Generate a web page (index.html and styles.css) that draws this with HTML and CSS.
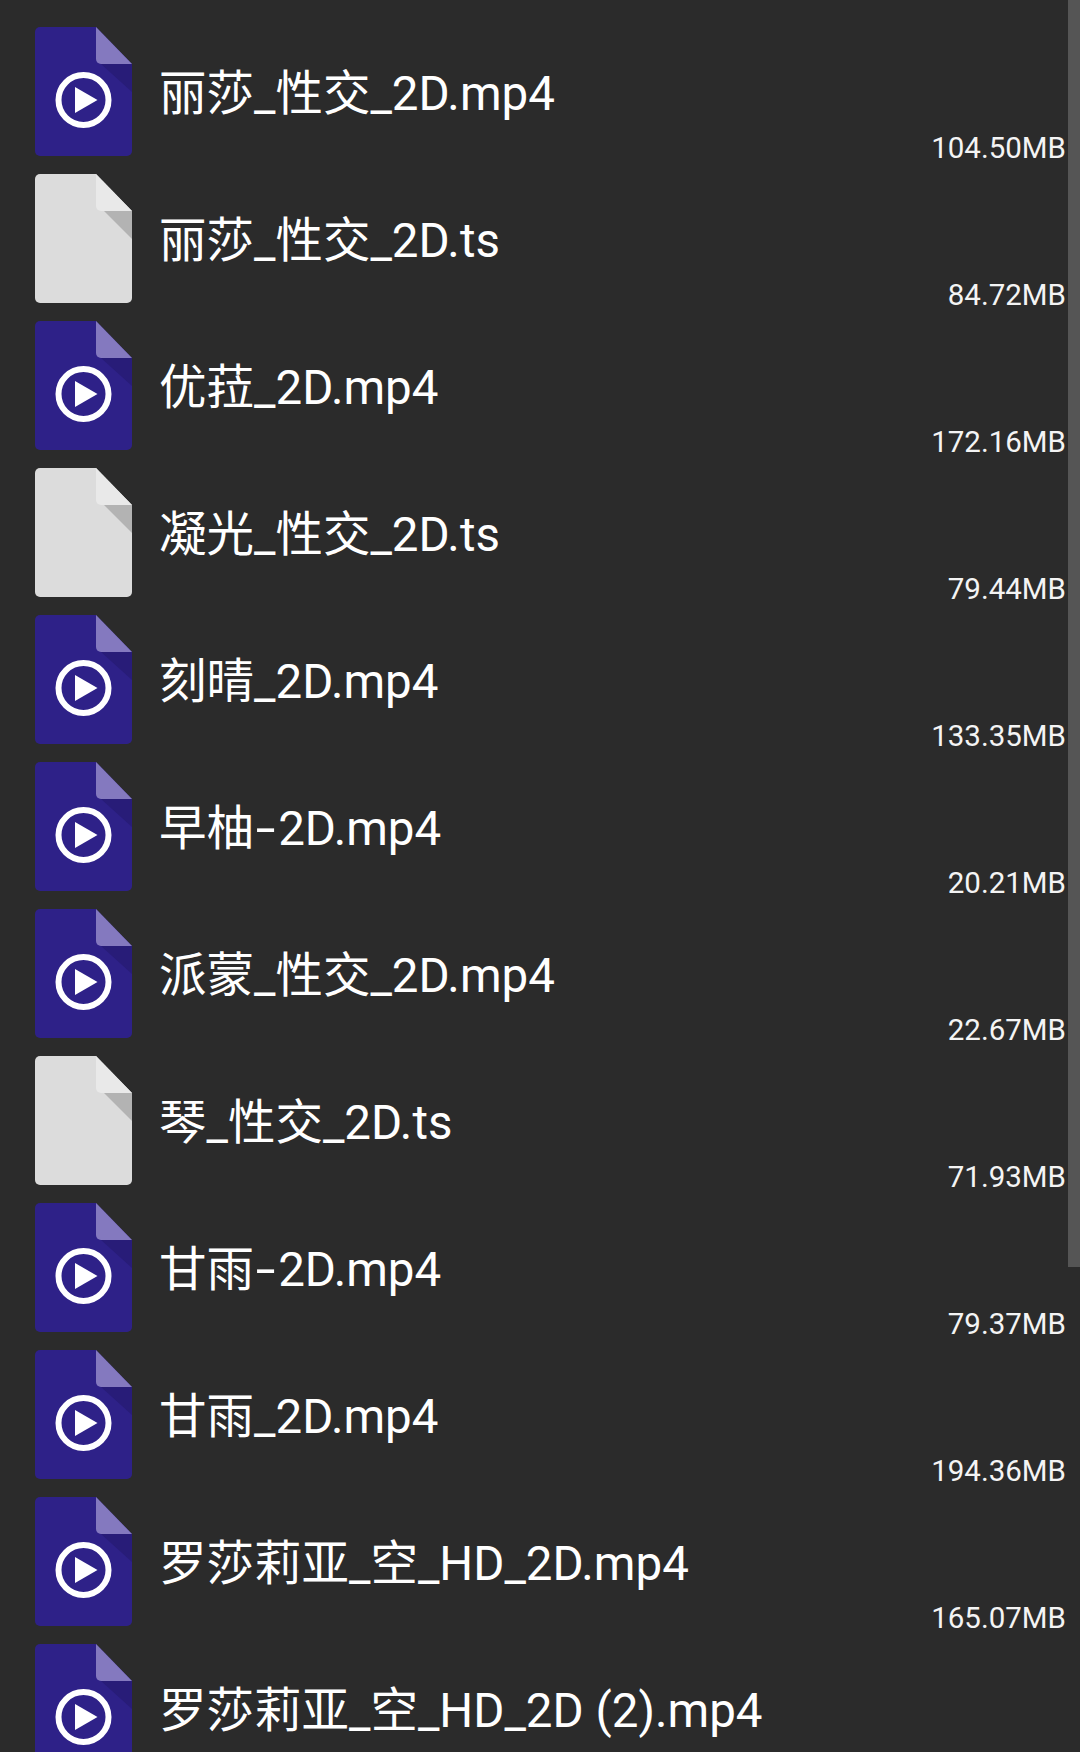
FILE: index.html
```html
<!DOCTYPE html>
<html lang="zh">
<head>
<meta charset="utf-8">
<title>Files</title>
<link rel="stylesheet" href="styles.css">
</head>
<body>
<svg class="defs" width="0" height="0">
  <symbol id="video" viewBox="0 0 97 129">
    <path class="v-body" d="M5 0H61L97 37V124a5 5 0 0 1-5 5H5a5 5 0 0 1-5-5V5a5 5 0 0 1 5-5Z"/>
    <path class="v-shadow" d="M66 37H97V65Z"/>
    <path class="v-fold" d="M61 0L97 37H66a5 5 0 0 1-5-5Z"/>
    <circle class="v-ring" cx="48.5" cy="73" r="25"/>
    <path class="v-play" d="M40 60L62.5 73L40 86Z"/>
  </symbol>
  <symbol id="file" viewBox="0 0 97 129">
    <path class="f-body" d="M5 0H61L97 37V124a5 5 0 0 1-5 5H5a5 5 0 0 1-5-5V5a5 5 0 0 1 5-5Z"/>
    <path class="f-shadow" d="M69 37H97V65Z"/>
    <path class="f-fold" d="M61 0L97 37H66a5 5 0 0 1-5-5Z"/>
  </symbol>
</svg>
<main class="list">
  <div class="row"><svg class="icon"><use href="#video"/></svg><span class="name">丽莎_性交_2D.mp4</span><span class="size">104.50MB</span></div>
  <div class="row"><svg class="icon"><use href="#file"/></svg><span class="name">丽莎_性交_2D.ts</span><span class="size">84.72MB</span></div>
  <div class="row"><svg class="icon"><use href="#video"/></svg><span class="name">优菈_2D.mp4</span><span class="size">172.16MB</span></div>
  <div class="row"><svg class="icon"><use href="#file"/></svg><span class="name">凝光_性交_2D.ts</span><span class="size">79.44MB</span></div>
  <div class="row"><svg class="icon"><use href="#video"/></svg><span class="name">刻晴_2D.mp4</span><span class="size">133.35MB</span></div>
  <div class="row"><svg class="icon"><use href="#video"/></svg><span class="name">早柚<span class="dash">-</span>2D.mp4</span><span class="size">20.21MB</span></div>
  <div class="row"><svg class="icon"><use href="#video"/></svg><span class="name">派蒙_性交_2D.mp4</span><span class="size">22.67MB</span></div>
  <div class="row"><svg class="icon"><use href="#file"/></svg><span class="name">琴_性交_2D.ts</span><span class="size">71.93MB</span></div>
  <div class="row"><svg class="icon"><use href="#video"/></svg><span class="name">甘雨<span class="dash">-</span>2D.mp4</span><span class="size">79.37MB</span></div>
  <div class="row"><svg class="icon"><use href="#video"/></svg><span class="name">甘雨_2D.mp4</span><span class="size">194.36MB</span></div>
  <div class="row"><svg class="icon"><use href="#video"/></svg><span class="name">罗莎莉亚_空_HD_2D.mp4</span><span class="size">165.07MB</span></div>
  <div class="row"><svg class="icon"><use href="#video"/></svg><span class="name">罗莎莉亚_空_HD_2D (2).mp4</span><span class="size"></span></div>
</main>
<div class="scrollbar"></div>
</body>
</html>
```
FILE: styles.css
```css
html, body {
  margin: 0;
  height: 1752px;
  overflow: hidden;
  background: #2b2b2b;
}
body {
  position: relative;
  font-family: "Roboto", "Noto Sans CJK SC", sans-serif;
  color: #fff;
}
.defs { position: absolute; }
.list {
  display: flex;
  flex-direction: column;
  padding: 27px 14px 0 35px;
}
.row {
  display: grid;
  grid-template-columns: 97px 1fr auto;
  column-gap: 27px;
  height: 147px;
  flex: none;
}
.icon {
  width: 97px;
  height: 129px;
  display: block;
}
.name {
  font-size: 47.5px;
  line-height: 60px;
  margin-top: 37px;
  white-space: nowrap;
}
.dash {
  display: inline-block;
  margin: 0 6px 0 5px;
  transform: scaleX(1.5);
}
.size {
  font-size: 29.5px;
  line-height: 36px;
  margin-top: 103px;
  color: #f4f4f4;
}
.scrollbar {
  position: absolute;
  top: 0;
  right: 0;
  width: 12px;
  height: 1267px;
  background: #555;
}
.v-body { fill: #2e2188; }
.v-shadow { fill: #281c78; }
.v-fold { fill: #8479bf; }
.v-ring { fill: none; stroke: #fff; stroke-width: 6; }
.v-play { fill: #fff; }
.f-body { fill: #dcdcdc; }
.f-shadow { fill: #b3b3b3; }
.f-fold { fill: #e9e9e9; }
```
